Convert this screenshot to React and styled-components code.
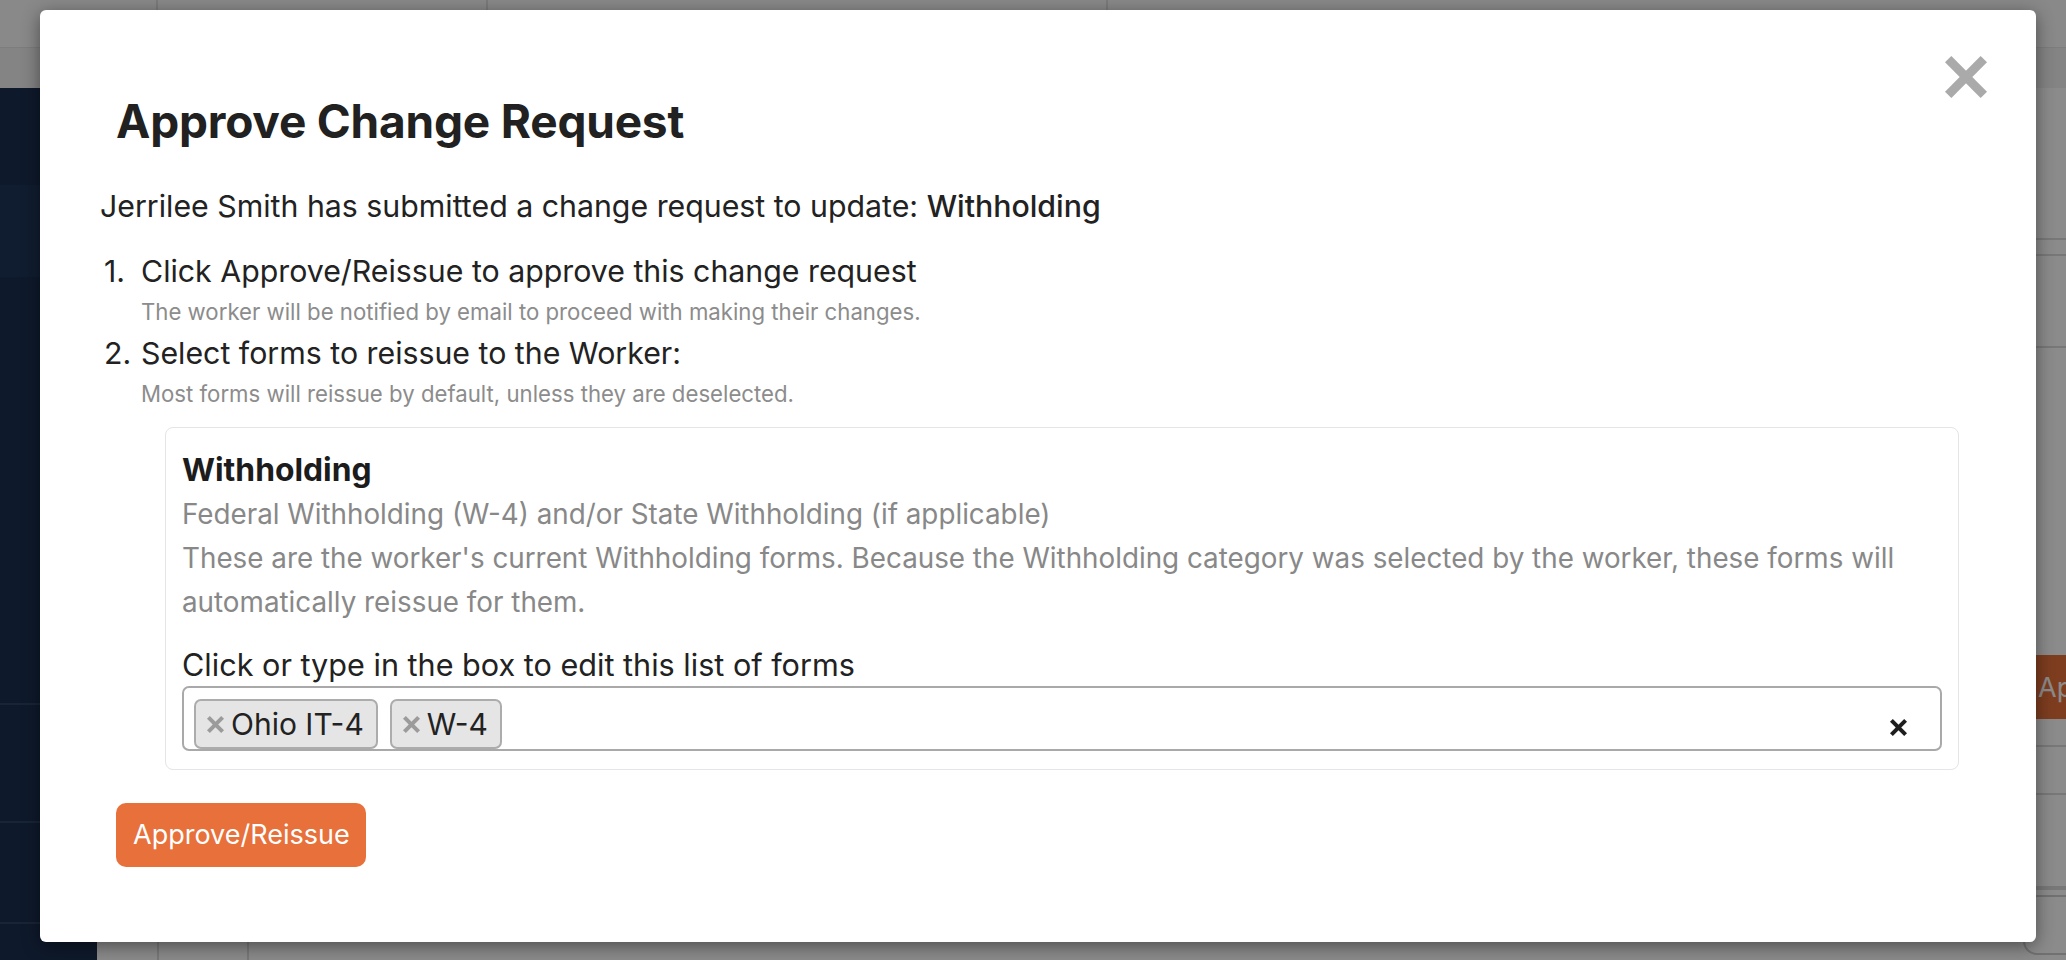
import React from "react";
import styled, { createGlobalStyle } from "styled-components";

const Global = createGlobalStyle`
  html, body { margin: 0; padding: 0; }
  body {
    width: 2066px;
    height: 960px;
    overflow: hidden;
    font-family: Inter, "Noto Sans", "Liberation Sans", sans-serif;
    color: #212121;
  }
  * { box-sizing: border-box; }
`;

/* ---------- background page (dimmed) ---------- */
const Page = styled.div`
  position: relative;
  width: 2066px;
  height: 960px;
  display: grid;
  grid-template-columns: 97px 1fr;
  grid-template-rows: 88px 1fr;
  background: #ffffff;
  overflow: hidden;
`;

const TopBar = styled.header`
  grid-column: 1 / -1;
  display: flex;
  flex-direction: column;
`;

const TopStripe = styled.div`
  height: 48px;
  display: flex;
  background: #fbfbfb;
  border-bottom: 1px solid #e6e6e6;
`;

const TopCell = styled.div`
  width: ${(p) => p.$w}px;
  border-right: 2px solid #e2e2e2;
`;

const SubStripe = styled.div`
  flex: 1;
  background: #f3f3f3;
`;

const Sidebar = styled.nav`
  background: #1a2f4f;
  display: flex;
  flex-direction: column;
`;

const NavItem = styled.div`
  height: ${(p) => p.$h}px;
  background: ${(p) => (p.$active ? "#1f3659" : "transparent")};
  border-bottom: ${(p) => (p.$line ? "2px solid #2d4566" : "none")};
`;

const Main = styled.main`
  display: flex;
  flex-direction: column;
  background: #ffffff;
`;

const Band = styled.div`
  height: ${(p) => p.$h}px;
  border-bottom: 2px solid #dcdcdc;
`;

const ActionRow = styled.div`
  height: 399px;
  display: flex;
  align-items: flex-end;
  padding: 0 0 26px 1925px;
  border-bottom: 2px solid #dcdcdc;
`;

const PageButton = styled.div`
  height: 64px;
  padding: 0 16px;
  display: flex;
  align-items: center;
  background: #e8703a;
  color: #fff;
  font-size: 27px;
  border-radius: 10px;
  white-space: nowrap;
`;

const TableRow = styled.div`
  flex: 1;
  display: flex;
  border-top: 2px solid #dcdcdc;
`;

const TableCell = styled.div`
  width: ${(p) => p.$w}px;
  border-right: 2px solid #dedede;
`;

const TableSpacer = styled.div`
  flex: 1;
  display: flex;
  justify-content: flex-end;
  align-items: flex-end;
  padding-bottom: 5px;
`;

const OutlineBox = styled.div`
  width: 260px;
  height: 60px;
  border: 2px solid #cfcfcf;
  border-radius: 14px;
  margin-right: -12px;
`;

const Backdrop = styled.div`
  position: absolute;
  inset: 0;
  background: rgba(0, 0, 0, 0.455);
`;

/* ---------- modal ---------- */
const Modal = styled.div`
  position: absolute;
  left: 40px;
  top: 10px;
  width: 1996px;
  height: 932px;
  background: #ffffff;
  border-radius: 6px;
  box-shadow: 0 4px 18px rgba(0, 0, 0, 0.45);
  display: flex;
  flex-direction: column;
`;

const Header = styled.div`
  display: flex;
  justify-content: space-between;
  align-items: flex-start;
  padding: 46px 49px 0 76px;
`;

const Title = styled.h3`
  margin: 38px 0 0;
  font-size: 46px;
  line-height: 54px;
  font-weight: 700;
  color: #212121;
  letter-spacing: -0.2px;
`;

const CloseButton = styled.button`
  width: 42px;
  height: 42px;
  padding: 0;
  border: 0;
  background: none;
  cursor: pointer;
  display: block;
`;

const Body = styled.div`
  padding: 0 77px 0 60px;
  display: flex;
  flex-direction: column;
  align-items: flex-start;
`;

const Intro = styled.p`
  margin: 40px 0 0;
  font-size: 30.3px;
  line-height: 36px;
  font-weight: 400;
  color: #222;

  strong {
    font-weight: 500;
  }
`;

const Steps = styled.ol`
  list-style: none;
  margin: 29px 0 0;
  padding: 0 0 0 4px;
  display: flex;
  flex-direction: column;
  gap: 9px;
`;

const Step = styled.li`
  display: grid;
  grid-template-columns: 37px 1fr;
`;

const StepNum = styled.span`
  font-size: 30.3px;
  line-height: 36px;
  color: #222;
`;

const StepContent = styled.div`
  display: flex;
  flex-direction: column;
  gap: 9px;
`;

const StepTitle = styled.span`
  font-size: 30.3px;
  line-height: 36px;
  color: #222;
`;

const StepHint = styled.span`
  font-size: 22.2px;
  line-height: 28px;
  color: #8c8c8c;
`;

const Card = styled.section`
  align-self: stretch;
  margin: 18.5px 0 0 65px;
  border: 1.5px solid #e4e4e9;
  border-radius: 8px;
  padding: 20px 16px 18px 16px;
  display: flex;
  flex-direction: column;
`;

const CardTitle = styled.h4`
  margin: 0;
  font-size: 31.8px;
  line-height: 44px;
  font-weight: 700;
  color: #1c1c1c;
`;

const CardText = styled.div`
  font-size: 27.8px;
  line-height: 44px;
  color: #888888;
`;

const FieldLabel = styled.label`
  margin-top: 23px;
  font-size: 30.6px;
  line-height: 36px;
  color: #222;
`;

const TagInput = styled.div`
  margin-top: 3.5px;
  height: 65px;
  border: 2px solid #a9a9a9;
  border-radius: 7px;
  display: flex;
  align-items: flex-start;
  gap: 12px;
  padding: 11px 33px 0 10px;
`;

const Tag = styled.div`
  height: 50px;
  display: flex;
  align-items: center;
  gap: 7px;
  padding: 0 12px 0 11px;
  background: #e5e5e5;
  border: 2px solid #acacac;
  border-radius: 7px;
  font-size: 30px;
  color: #222;
  white-space: nowrap;
`;

const ClearButton = styled.button`
  margin: 20px 0 0 auto;
  width: 17px;
  height: 17px;
  padding: 0;
  border: 0;
  background: none;
  display: block;
`;

const PrimaryButton = styled.button`
  margin: 32.7px 0 0 16px;
  height: 64px;
  padding: 0 16px 0 17px;
  border: 0;
  border-radius: 10px;
  background: #e8703a;
  color: #ffffff;
  font-family: Inter, "Noto Sans", sans-serif;
  font-size: 27px;
  cursor: pointer;
`;

const Cross = ({ size, stroke, color, ...rest }) => {
  const k = stroke / 2 / Math.SQRT2;
  return (
    <svg width={size} height={size} viewBox={`0 0 ${size} ${size}`} {...rest}>
      <g stroke={color} strokeWidth={stroke} strokeLinecap="butt">
        <line x1={k} y1={k} x2={size - k} y2={size - k} />
        <line x1={size - k} y1={k} x2={k} y2={size - k} />
      </g>
    </svg>
  );
};

const FormTag = ({ label }) => (
  <Tag>
    <Cross size={17} stroke={4} color="#9b9b9b" />
    <span>{label}</span>
  </Tag>
);

export default function App() {
  return (
    <>
      <Global />
      <Page>
        <TopBar>
          <TopStripe>
            <TopCell $w={158} />
            <TopCell $w={330} />
            <TopCell $w={620} />
          </TopStripe>
          <SubStripe />
        </TopBar>
        <Sidebar>
          <NavItem $h={97} />
          <NavItem $h={92} $active />
          <NavItem $h={428} $line />
          <NavItem $h={118} $line />
          <NavItem $h={101} $line />
        </Sidebar>
        <Main>
          <Band $h={152} />
          <Band $h={16} />
          <Band $h={92} />
          <ActionRow>
            <PageButton>Approve/Reissue</PageButton>
          </ActionRow>
          <Band $h={48} />
          <Band $h={93} />
          <TableRow>
            <TableCell $w={62} />
            <TableCell $w={90} />
            <TableSpacer>
              <OutlineBox />
            </TableSpacer>
          </TableRow>
        </Main>
        <Backdrop />
        <Modal role="dialog" aria-modal="true">
          <Header>
            <Title>Approve Change Request</Title>
            <CloseButton aria-label="Close">
              <Cross size={42} stroke={9} color="#aaaaaa" />
            </CloseButton>
          </Header>
          <Body>
            <Intro>
              Jerrilee Smith has submitted a change request to update:{" "}
              <strong>Withholding</strong>
            </Intro>
            <Steps>
              <Step>
                <StepNum>1.</StepNum>
                <StepContent>
                  <StepTitle>Click Approve/Reissue to approve this change request</StepTitle>
                  <StepHint>The worker will be notified by email to proceed with making their changes.</StepHint>
                </StepContent>
              </Step>
              <Step>
                <StepNum>2.</StepNum>
                <StepContent>
                  <StepTitle>Select forms to reissue to the Worker:</StepTitle>
                  <StepHint>Most forms will reissue by default, unless they are deselected.</StepHint>
                </StepContent>
              </Step>
            </Steps>
            <Card>
              <CardTitle>Withholding</CardTitle>
              <CardText>Federal Withholding (W-4) and/or State Withholding (if applicable)</CardText>
              <CardText>
                These are the worker's current Withholding forms. Because the Withholding category was selected by the worker, these forms will automatically reissue for them.
              </CardText>
              <FieldLabel>Click or type in the box to edit this list of forms</FieldLabel>
              <TagInput>
                <FormTag label="Ohio IT-4" />
                <FormTag label="W-4" />
                <ClearButton aria-label="Clear">
                  <Cross size={17} stroke={4} color="#1e1e1e" />
                </ClearButton>
              </TagInput>
            </Card>
            <PrimaryButton>Approve/Reissue</PrimaryButton>
          </Body>
        </Modal>
      </Page>
    </>
  );
}
